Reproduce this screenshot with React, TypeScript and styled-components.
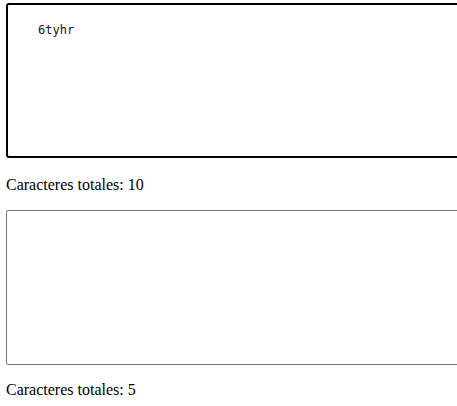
import React, { useState } from "react";
import styled, { createGlobalStyle } from "styled-components";

const GlobalStyle = createGlobalStyle`
  html, body {
    margin: 0;
    padding: 0;
    background: #ffffff;
    overflow: hidden;
  }
  body {
    font-family: "Liberation Serif", "Times New Roman", serif;
    font-size: 16px;
    color: #000;
  }
`;

const Page = styled.div`
  display: flex;
  flex-direction: column;
  align-items: flex-start;
  padding: 3px 0 0 6px;
`;

const Box = styled.textarea<{ $active?: boolean; $height: number }>`
  box-sizing: border-box;
  width: 490px;
  height: ${(p) => p.$height}px;
  margin: 0;
  padding: ${(p) => (p.$active ? "18px 30px" : "17px 31px")};
  border: ${(p) => (p.$active ? "2px solid #000" : "1px solid #767676")};
  border-radius: ${(p) => (p.$active ? "3px" : "2px")};
  outline: none;
  resize: none;
  background: #fff;
  color: #111827;
  caret-color: #000;
  font-family: "DejaVu Sans Mono", monospace;
  font-size: 12px;
  line-height: 14px;
`;

const Counter = styled.p<{ $top: number }>`
  margin: ${(p) => p.$top}px 0 16px 0;
  font-size: 16px;
  line-height: 18px;
`;

export default function App() {
  const [first, setFirst] = useState("6tyhr");
  const [second, setSecond] = useState("");

  return (
    <>
      <GlobalStyle />
      <Page>
        <Box
          $active
          $height={155}
          autoFocus
          value={first}
          onChange={(e) => setFirst(e.target.value)}
          onFocus={(e) => {
            const len = e.target.value.length;
            e.target.setSelectionRange(len, len);
          }}
        />
        <Counter $top={18}>Caracteres totales: 10</Counter>
        <Box
          $height={155}
          value={second}
          onChange={(e) => setSecond(e.target.value)}
        />
        <Counter $top={16}>Caracteres totales: 5</Counter>
      </Page>
    </>
  );
}
